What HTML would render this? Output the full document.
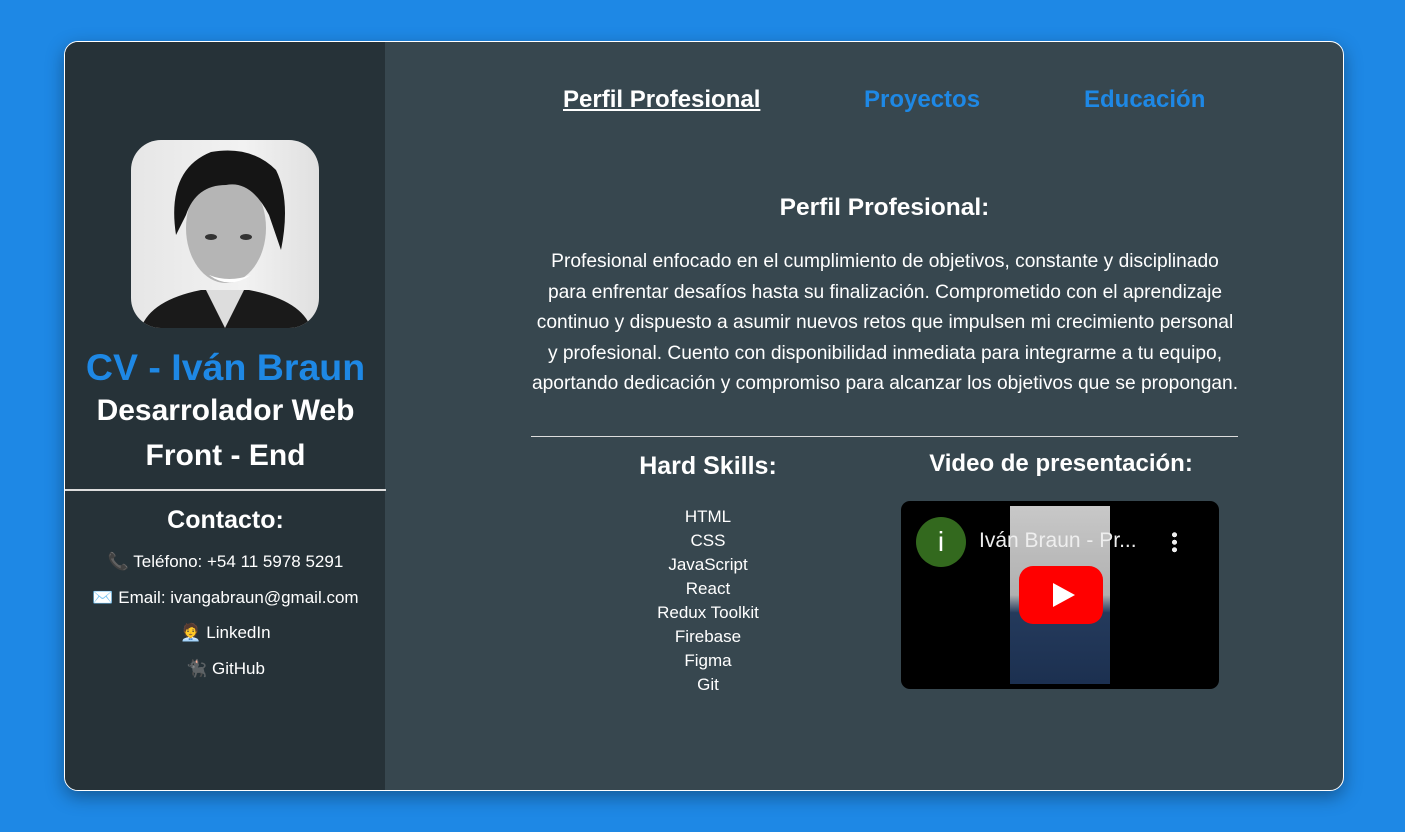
<!DOCTYPE html>
<html><head><meta charset="utf-8"><style>
*{margin:0;padding:0;box-sizing:border-box}
body{width:1405px;height:832px;background:#1e88e5;font-family:"Liberation Sans",Arial,sans-serif;position:relative;overflow:hidden;color:#fff}
.card{position:absolute;left:64px;top:41px;width:1280px;height:750px;border:1px solid #fff;border-radius:14px;overflow:hidden;background:#37474f;box-shadow:0 6px 18px rgba(0,0,0,.35)}
.side{position:absolute;left:0;top:0;width:320px;height:100%;background:#263238}
.c{position:absolute;text-align:center;white-space:nowrap}
.b{font-weight:bold}
</style></head><body>
<div class="card">
<div class="side">
  <div style="position:absolute;left:66px;top:98px;width:188px;height:188px;border-radius:30px;overflow:hidden;background:linear-gradient(90deg,#e6e6e6,#f2f2f2 60%,#e0e0e0)">
    <svg width="188" height="188" viewBox="0 0 188 188">
      <path d="M10 188 Q20 160 70 150 L118 150 Q170 160 180 188Z" fill="#1a1a1a"/>
      <path d="M75 150 L94 188 L113 150Z" fill="#ddd"/>
      <ellipse cx="95" cy="88" rx="40" ry="55" fill="#b5b5b5"/>
      <path d="M45 95 Q35 30 80 12 Q120 5 145 30 Q160 60 150 110 L138 75 Q120 40 95 45 Q65 45 55 75Z" fill="#151515"/>
      <ellipse cx="80" cy="97" rx="6" ry="3" fill="#333"/>
      <ellipse cx="115" cy="97" rx="6" ry="3" fill="#333"/>
      <path d="M78 135 Q98 150 120 135 Q98 143 78 135Z" fill="#fff"/>
    </svg>
  </div>
  <div class="c b" style="left:0;width:321px;top:304px;font-size:37.5px;color:#1e88e5">CV - Iván Braun</div>
  <div class="c b" style="left:0;width:321px;top:352px;font-size:30px">Desarrolador Web</div>
  <div class="c b" style="left:0;width:321px;top:397px;font-size:30px">Front - End</div>
  <div style="position:absolute;left:0;top:447px;width:321px;height:2px;background:#ddd"></div>
  <div class="c b" style="left:0;width:321px;top:464px;font-size:25px">Contacto:</div>
  <div class="c" style="left:0;width:321px;top:510px;font-size:17px">📞 Teléfono: +54 11 5978 5291</div>
  <div class="c" style="left:0;width:321px;top:546px;font-size:17px">✉️ Email: ivangabraun@gmail.com</div>
  <div class="c" style="left:0;width:321px;top:581px;font-size:17px">🧑‍💼 LinkedIn</div>
  <div class="c" style="left:0;width:321px;top:617px;font-size:17px">🐈‍⬛ GitHub</div>
</div>
<div class="c b" style="left:498px;top:44px;font-size:24px;text-decoration:underline">Perfil Profesional</div>
<div class="c b" style="left:799px;top:44px;font-size:24px;color:#1e88e5">Proyectos</div>
<div class="c b" style="left:1019px;top:44px;font-size:24px;color:#1e88e5">Educación</div>
<div class="c b" style="left:466px;width:707px;top:152px;font-size:24.5px">Perfil Profesional:</div>
<div class="c" style="left:420px;width:800px;top:205px;font-size:19.2px;line-height:30.5px">Profesional enfocado en el cumplimiento de objetivos, constante y disciplinado<br>para enfrentar desafíos hasta su finalización. Comprometido con el aprendizaje<br>continuo y dispuesto a asumir nuevos retos que impulsen mi crecimiento personal<br>y profesional. Cuento con disponibilidad inmediata para integrarme a tu equipo,<br>aportando dedicación y compromiso para alcanzar los objetivos que se propongan.</div>
<div style="position:absolute;left:466px;top:394px;width:707px;height:1px;background:#ddd"></div>
<div class="c b" style="left:493px;width:300px;top:410px;font-size:25px">Hard Skills:</div>
<div class="c" style="left:493px;width:300px;top:463px;font-size:17px;line-height:24px">HTML<br>CSS<br>JavaScript<br>React<br>Redux Toolkit<br>Firebase<br>Figma<br>Git</div>
<div class="c b" style="left:846px;width:300px;top:408px;font-size:24px">Video de presentación:</div>
<div style="position:absolute;left:836px;top:459px;width:318px;height:188px;background:#000;border-radius:9px;overflow:hidden">
  <div style="position:absolute;left:109px;top:5px;width:100px;height:178px;background:linear-gradient(#c8c8c8,#b0b0b0 50%,#243a5c 60%,#1c3050)"></div>
  <div style="position:absolute;left:15px;top:16px;width:50px;height:50px;border-radius:50%;background:#33691e;font-size:28px;text-align:center;line-height:50px">i</div>
  <div style="position:absolute;left:78px;top:28px;font-size:21px;color:#eee">Iván Braun - Pr...</div>
  <div style="position:absolute;left:271px;top:30px;width:5px;height:22px;background:radial-gradient(circle,#eee 2.4px,transparent 2.6px) 0 0/5px 7.5px"></div>
  <div style="position:absolute;left:118px;top:65px;width:84px;height:58px;background:#f00;border-radius:14px"></div>
  <div style="position:absolute;left:152px;top:82px;width:0;height:0;border-left:22px solid #fff;border-top:12px solid transparent;border-bottom:12px solid transparent"></div>
</div>
</div>
</body></html>
